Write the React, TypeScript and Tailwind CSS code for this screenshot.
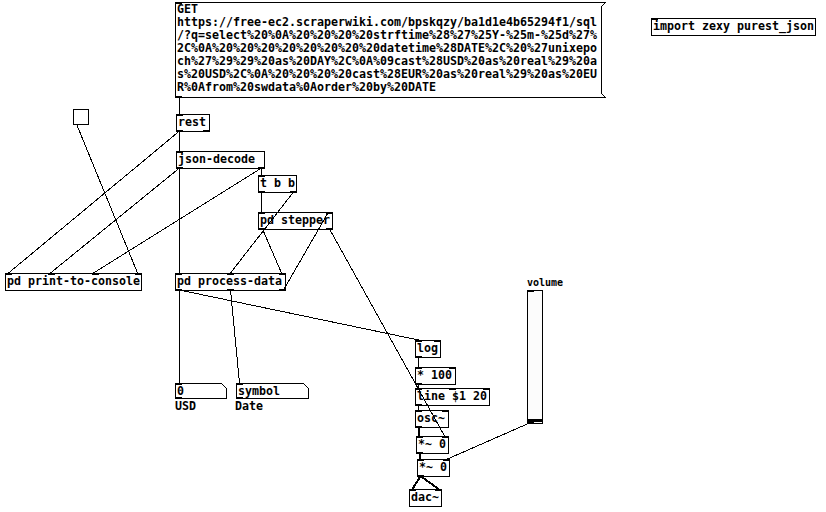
import React from "react";

type B = { x: number; y: number; w: number; h: number; t: string; i: number; o: number };

const boxes: B[] = [
  { x: 176, y: 114, w: 34, h: 18, t: "rest", i: 1, o: 2 },
  { x: 176, y: 151, w: 89, h: 18, t: "json-decode", i: 1, o: 2 },
  { x: 258, y: 175, w: 39, h: 18, t: "t b b", i: 1, o: 2 },
  { x: 258, y: 212, w: 75, h: 18, t: "pd stepper", i: 2, o: 2 },
  { x: 5, y: 273, w: 137, h: 18, t: "pd print-to-console", i: 4, o: 0 },
  { x: 175, y: 273, w: 111, h: 18, t: "pd process-data", i: 3, o: 3 },
  { x: 415, y: 340, w: 26, h: 18, t: "log", i: 2, o: 1 },
  { x: 415, y: 367, w: 41, h: 18, t: "* 100", i: 2, o: 1 },
  { x: 415, y: 388, w: 75, h: 18, t: "line $1 20", i: 3, o: 1 },
  { x: 415, y: 410, w: 34, h: 18, t: "osc~", i: 2, o: 1 },
  { x: 416, y: 436, w: 33, h: 18, t: "*~ 0", i: 2, o: 1 },
  { x: 417, y: 459, w: 33, h: 18, t: "*~ 0", i: 2, o: 1 },
  { x: 409, y: 489, w: 33, h: 18, t: "dac~", i: 2, o: 0 },
  { x: 651, y: 18, w: 165, h: 18, t: "import zexy purest_json", i: 1, o: 0 },
];

// [x1,y1,x2,y2,thick]
const wires: [number, number, number, number, boolean?][] = [
  [179, 97, 179, 114],
  [179, 131, 179, 151],
  [179, 168, 179, 273],
  [179, 290, 179, 383],
  [179, 131, 8, 273],
  [179, 168, 50, 273],
  [261, 168, 93, 273],
  [261, 168, 261, 175],
  [76, 124, 137, 273],
  [261, 192, 261, 212],
  [293, 192, 230, 273],
  [262, 229, 281, 273],
  [283, 290, 328, 212],
  [329, 229, 444, 436],
  [179, 290, 418, 340],
  [230, 290, 239, 383],
  [418, 357, 418, 367],
  [418, 384, 418, 388],
  [418, 405, 418, 410],
  [418, 427, 419, 436, true],
  [419, 453, 420, 459, true],
  [420, 476, 412, 489, true],
  [420, 476, 438, 489, true],
  [529, 423, 447, 459],
];

const font = "font-['DejaVu_Sans_Mono',monospace] font-bold text-[11.63px] text-black";

function Nubs({ w, n, top }: { w: number; n: number; top: boolean }) {
  const items = [];
  for (let k = 0; k < n; k++) {
    const left = n === 1 ? -1 : -1 + Math.round(((w - 7) * k) / (n - 1));
    items.push(
      <div
        key={k}
        className={`absolute h-[2px] w-[7px] bg-black ${top ? "top-[-1px]" : "bottom-[-1px]"}`}
        style={{ left }}
      />
    );
  }
  return <>{items}</>;
}

function Box({ b }: { b: B }) {
  return (
    <div
      className={`absolute border border-black whitespace-pre pl-[1px] leading-[14px] ${font}`}
      style={{ left: b.x, top: b.y, width: b.w, height: b.h }}
    >
      {b.t}
      <Nubs w={b.w} n={b.i} top={true} />
      <Nubs w={b.w} n={b.o} top={false} />
    </div>
  );
}

function Atom({ x, w, text }: { x: number; w: number; text: string }) {
  return (
    <div className="absolute" style={{ left: x, top: 383, width: w, height: 16 }}>
      <svg className="absolute left-0 top-0" width={w} height={16} shapeRendering="crispEdges">
        <polygon
          points={`0.5,0.5 ${w - 5.5},0.5 ${w - 0.5},5.5 ${w - 0.5},15.5 0.5,15.5`}
          fill="none"
          stroke="black"
          strokeWidth={1}
        />
      </svg>
      <div className="absolute left-0 top-0 h-[2px] w-[7px] bg-black" />
      <div className="absolute left-0 bottom-0 h-[2px] w-[7px] bg-black" />
      <div className={`absolute left-[2px] top-[1px] leading-[14px] ${font}`}>{text}</div>
    </div>
  );
}

const msgLines = [
  "GET",
  "https://free-ec2.scraperwiki.com/bpskqzy/ba1d1e4b65294f1/sql",
  "/?q=select%20%0A%20%20%20%20strftime%28%27%25Y-%25m-%25d%27%",
  "2C%0A%20%20%20%20%20%20%20%20datetime%28DATE%2C%20%27unixepo",
  "ch%27%29%29%20as%20DAY%2C%0A%09cast%28USD%20as%20real%29%20a",
  "s%20USD%2C%0A%20%20%20%20cast%28EUR%20as%20real%29%20as%20EU",
  "R%0Afrom%20swdata%0Aorder%20by%20DATE",
];

export default function App() {
  return (
    <div className="relative h-[512px] w-[826px] overflow-hidden bg-white">
      {/* message box */}
      <div className="absolute left-[175px] top-[2px] h-[96px] w-[431px]">
        <svg className="absolute left-0 top-0" width={431} height={96} shapeRendering="crispEdges">
          <polyline
            points="430.5,0.5 0.5,0.5 0.5,95.5 430.5,95.5"
            fill="none"
            stroke="black"
            strokeWidth={1}
          />
          <polyline
            points="430.5,0.5 426.5,4.5 426.5,91.5 430.5,95.5"
            fill="none"
            stroke="black"
            strokeWidth={1}
          />
        </svg>
        <div className="absolute left-0 top-0 h-[2px] w-[7px] bg-black" />
        <div className="absolute left-0 bottom-0 h-[2px] w-[7px] bg-black" />
        <div className={`absolute left-[2px] top-[1px] whitespace-pre leading-[13px] ${font}`}>
          {msgLines.map((l, k) => (
            <div key={k}>{l}</div>
          ))}
        </div>
      </div>

      {/* toggle */}
      <div className="absolute left-[73px] top-[109px] h-[16px] w-[16px] border border-black" />

      {boxes.map((b, k) => (
        <Box key={k} b={b} />
      ))}

      {/* number & symbol atoms */}
      <Atom x={175} w={52} text="0" />
      <Atom x={236} w={73} text="symbol" />
      <div className={`absolute left-[175px] top-[399px] leading-[14px] ${font}`}>USD</div>
      <div className={`absolute left-[235px] top-[399px] leading-[14px] ${font}`}>Date</div>

      {/* vslider */}
      <div className="absolute left-[527px] top-[277px] font-['DejaVu_Sans_Mono',monospace] font-bold text-[10px] leading-[12px] text-black">
        volume
      </div>
      <div className="absolute left-[527px] top-[290px] h-[134px] w-[16px] border border-black bg-[#fcfcfc]">
        <div className="absolute left-[-1px] top-[-1px] h-[2px] w-[7px] bg-black" />
        <div className="absolute left-0 right-0 bottom-[1px] h-[3px] bg-black" />
        <div className="absolute left-[-1px] bottom-[-1px] h-[2px] w-[7px] bg-black" />
      </div>

      {/* wires */}
      <svg
        className="pointer-events-none absolute left-0 top-0"
        width={826}
        height={512}
        shapeRendering="crispEdges"
      >
        {wires.map(([x1, y1, x2, y2, thick], k) => (
          <line
            key={k}
            x1={x1 + 0.5}
            y1={y1}
            x2={x2 + 0.5}
            y2={y2}
            stroke="black"
            strokeWidth={thick ? 2 : 1}
          />
        ))}
      </svg>
    </div>
  );
}
